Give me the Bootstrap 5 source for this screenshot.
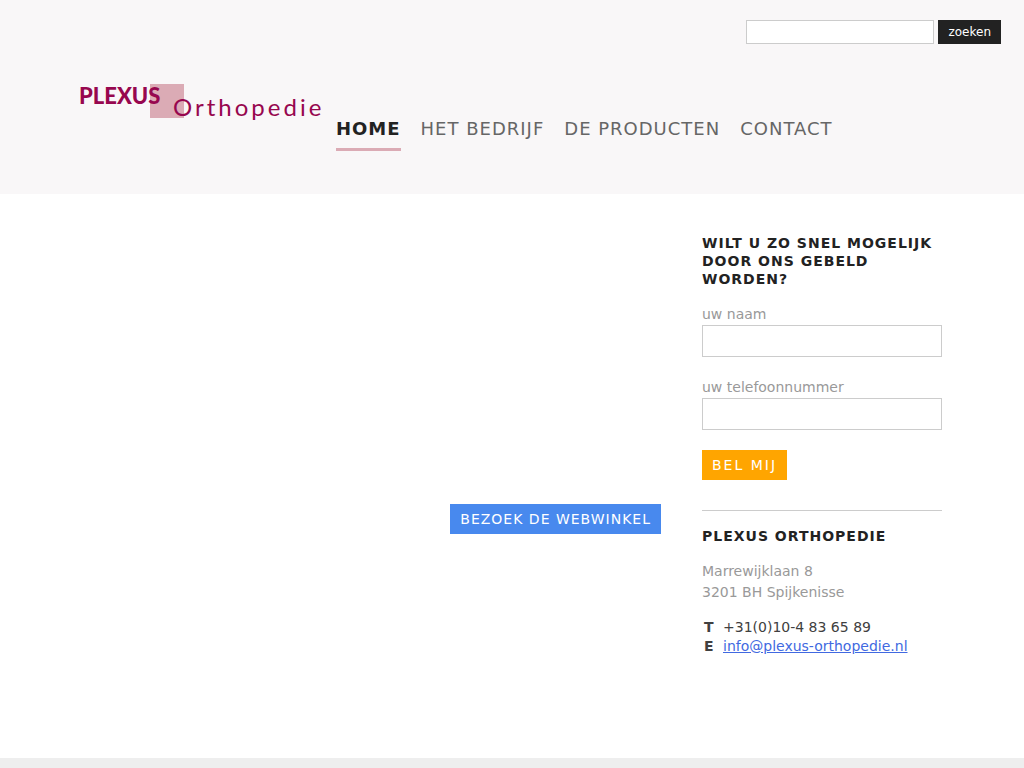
<!DOCTYPE html>
<html lang="nl">
<head>
<meta charset="utf-8">
<meta name="viewport" content="width=device-width, initial-scale=1">
<title>Plexus Orthopedie</title>
<link href="https://cdn.jsdelivr.net/npm/bootstrap@5.3.0/dist/css/bootstrap.min.css" rel="stylesheet">
<style>
body { font-family: "DejaVu Sans", sans-serif; font-size: 14px; line-height: 21px; color: #404040; background: #fff; }
.site-header { background: #f9f7f8; padding: 20px 23px 43px 78px; }
.search-form { gap: 4px; margin-bottom: 36px; }
.search-form .form-control { width: 188px; height: 24px; padding: 0 4px; font-size: 12px; }
.search-form .btn { height: 24px; padding: 0 10px; font-size: 12px; line-height: 24px; color: #fff; background: #222; border: 0; }
.form-control { border: 1px solid #ccc; }
.brand-row { gap: 8px; }
.main-nav { gap: 20px; padding-top: 36px; }
.main-nav .nav-link { padding: 0 0 7px; font-size: 18px; line-height: 25px; letter-spacing: 1px; color: #666; border-bottom: 3px solid transparent; text-transform: uppercase; }
.main-nav .nav-link.active { color: #222; font-weight: 700; border-color: #dbabb5; }
.page-main { gap: 41px; padding: 40px 82px 100px 80px; }
.slideshow { min-height: 270px; }
.side-column { width: 240px; }
.side-title { margin-bottom: 16px; font-size: 14px; line-height: 18px; font-weight: 700; letter-spacing: 1px; color: #222; text-transform: uppercase; }
.side-column .form-label { color: #999; }
.side-column .form-control { height: 32px; padding: 0 8px; font-size: 14px; margin-bottom: 20px; }
.action { height: 30px; padding: 0 10px; font-size: 14px; line-height: 30px; letter-spacing: 1px; color: #fff; border: 0; text-transform: uppercase; }
.action-shop { background: #4889ee; }
.action-call { background: #ffa500; letter-spacing: 2px; }
.contact { margin-top: 30px; padding-top: 16px; border-top: 1px solid #ccc; }
.contact address { color: #999; margin-bottom: 15px; }
.contact-table th, .contact-table td { padding: 0 0 0 2px; line-height: 19px; }
.contact-table th { width: 21px; }
.contact-table td { padding-left: 0; }
.contact-table a { color: #4169e1; }
.site-footer { min-height: 10px; background: #eee; }
</style>
</head>
<body class="d-flex flex-column min-vh-100">
<header class="site-header">
  <form class="search-form d-flex justify-content-end" role="search">
    <input class="form-control rounded-0" type="search" aria-label="Zoeken">
    <button class="btn rounded-0" type="submit">zoeken</button>
  </form>
  <div class="brand-row d-flex flex-wrap">
    <a href="#" aria-label="Plexus Orthopedie">
      <svg class="d-block" width="250" height="46" viewBox="-2 -4 250 46" role="img">
        <rect x="70" width="34" height="34" fill="#dbabb5"/>
        <g font-family="Lato, sans-serif" fill="#97074f">
          <text x="-1" y="20" font-size="22" font-weight="900">PLEXUS</text>
          <text x="93" y="32" font-size="24" font-weight="400" letter-spacing="3">Orthopedie</text>
        </g>
      </svg>
    </a>
    <nav>
      <ul class="main-nav nav">
        <li><a class="nav-link active" aria-current="page" href="#">Home</a></li>
        <li><a class="nav-link" href="#">Het bedrijf</a></li>
        <li><a class="nav-link" href="#">De producten</a></li>
        <li><a class="nav-link" href="#">Contact</a></li>
      </ul>
    </nav>
  </div>
</header>
<main class="page-main d-flex flex-grow-1">
  <section class="flex-grow-1 text-end">
    <div class="slideshow"></div>
    <a class="action action-shop btn rounded-0" href="#">Bezoek de webwinkel</a>
  </section>
  <aside class="side-column flex-shrink-0">
    <form>
      <h2 class="side-title">Wilt u zo snel mogelijk door ons gebeld worden?</h2>
      <label class="form-label d-block m-0" for="naam">uw naam</label>
      <input class="form-control rounded-0" type="text" id="naam">
      <label class="form-label d-block m-0" for="telefoon">uw telefoonnummer</label>
      <input class="form-control rounded-0" type="tel" id="telefoon">
      <button class="action action-call btn rounded-0 d-block" type="submit">Bel mij</button>
    </form>
    <section class="contact">
      <h2 class="side-title">Plexus Orthopedie</h2>
      <address>Marrewijklaan 8<br>3201 BH Spijkenisse</address>
      <table class="contact-table">
        <tr><th scope="row">T</th><td>+31(0)10-4 83 65 89</td></tr>
        <tr><th scope="row">E</th><td><a href="mailto:info@plexus-orthopedie.nl">info@plexus-orthopedie.nl</a></td></tr>
      </table>
    </section>
  </aside>
</main>
<footer class="site-footer"></footer>
<script src="https://cdn.jsdelivr.net/npm/bootstrap@5.3.0/dist/js/bootstrap.bundle.min.js"></script>
</body>
</html>
